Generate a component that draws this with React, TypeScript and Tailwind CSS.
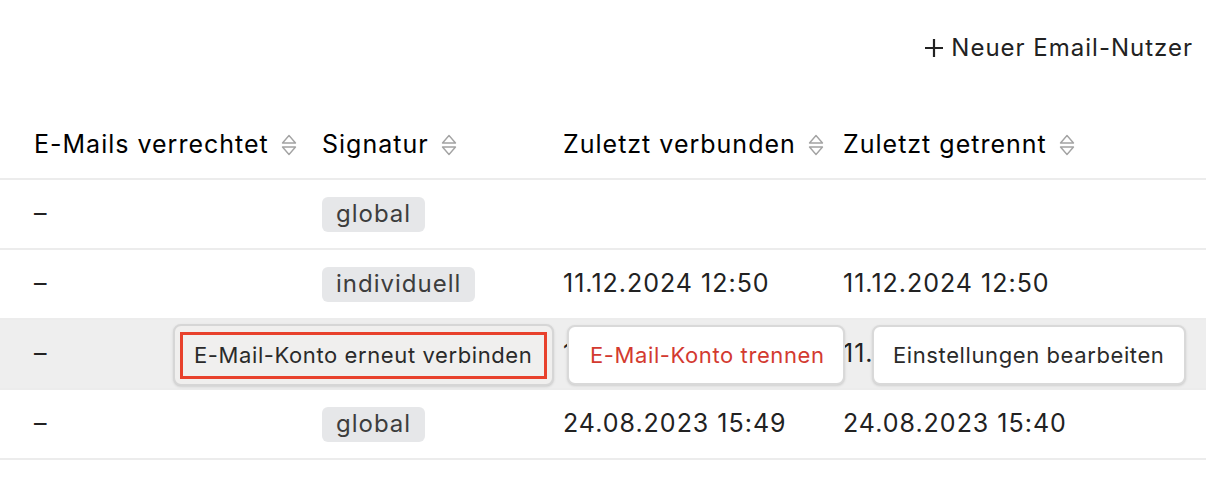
import React from "react";

type Row = {
  signatur: string;
  verbunden: string;
  getrennt: string;
  active?: boolean;
};

const rows: Row[] = [
  { signatur: "global", verbunden: "", getrennt: "" },
  { signatur: "individuell", verbunden: "11.12.2024 12:50", getrennt: "11.12.2024 12:50" },
  { signatur: "individuell", verbunden: "11.12.2024 12:50", getrennt: "11.12.2024 12:50", active: true },
  { signatur: "global", verbunden: "24.08.2023 15:49", getrennt: "24.08.2023 15:40" },
];

function SortIcon() {
  return (
    <svg width="16" height="26" viewBox="0 0 16 26" fill="none" className="shrink-0">
      <path d="M1.5 11 L8 3.5 L14.5 11 Z" stroke="#a3a3a3" strokeWidth="1.4" strokeLinejoin="round" />
      <path d="M1.5 15 L8 22.5 L14.5 15 Z" stroke="#a3a3a3" strokeWidth="1.4" strokeLinejoin="round" />
    </svg>
  );
}

function HeaderCell({ label, className }: { label: string; className: string }) {
  return (
    <div className={`flex items-center gap-[12px] ${className}`}>
      <span>{label}</span>
      <SortIcon />
    </div>
  );
}

function Badge({ text }: { text: string }) {
  return (
    <span className="inline-flex h-[35px] items-center rounded-[6px] bg-[#e6e7e9] px-[14px] text-[24px] tracking-[1px] text-[#3d3d3d]">
      {text}
    </span>
  );
}

export default function App() {
  return (
    <div
      className="h-[480px] w-[1226px] bg-white text-[#1f1f1f]"
      style={{ fontFamily: "Inter, 'Noto Sans', sans-serif" }}
    >
      <div className="w-[1206px]">
        {/* toolbar */}
        <div className="flex h-[92px] items-start justify-end pr-[13px] pt-[30px]">
          <button type="button" className="flex items-center gap-[7px] text-[24px] tracking-[1px] text-[#222]">
            <svg width="20" height="20" viewBox="0 0 20 20" fill="none">
              <path d="M10 1 V19 M1 10 H19" stroke="#222" strokeWidth="2.2" />
            </svg>
            <span>Neuer Email-Nutzer</span>
          </button>
        </div>

        {/* table header */}
        <div className="flex h-[88px] items-center border-b-2 border-[#ececec] pt-[20px] text-[25px] tracking-[1px] text-black">
          <HeaderCell label="E-Mails verrechtet" className="w-[322px] pl-[34px]" />
          <HeaderCell label="Signatur" className="w-[241px]" />
          <HeaderCell label="Zuletzt verbunden" className="w-[280px]" />
          <HeaderCell label="Zuletzt getrennt" className="flex-1" />
        </div>

        {/* rows */}
        {rows.map((row, i) => (
          <div
            key={i}
            className={`relative flex h-[70px] items-center border-b-2 border-[#ececec] text-[25px] tracking-[1px] text-[#222] ${
              row.active ? "bg-[#eeeeee]" : ""
            }`}
          >
            <div className="w-[322px] pl-[34px]">–</div>
            <div className="w-[241px]">{!row.active && <Badge text={row.signatur} />}</div>
            <div className="w-[280px]">{row.verbunden}</div>
            <div className="flex-1">{row.getrennt}</div>

            {row.active && (
              <div className="absolute left-[173px] top-[4px] flex items-center text-[22px] tracking-[0.6px]">
                <button
                  type="button"
                  className="flex h-[62px] w-[381px] items-center justify-center rounded-[8px] border-2 border-[#d6d6d6] bg-[#f0efee] shadow-sm"
                >
                  <span className="flex h-[47px] w-[367px] items-center border-[3px] border-[#e8412c] pl-[11px] text-[#2a2a2a]">
                    E-Mail-Konto erneut verbinden
                  </span>
                </button>
                <button
                  type="button"
                  className="ml-[13px] flex h-[60px] w-[278px] items-center rounded-[8px] border-2 border-[#d9d9d9] bg-white pl-[21px] text-[#d33a30] shadow-sm"
                >
                  E-Mail-Konto trennen
                </button>
                <button
                  type="button"
                  className="ml-[27px] flex h-[60px] w-[314px] items-center rounded-[8px] border-2 border-[#d9d9d9] bg-white pl-[19px] text-[#2a2a2a] shadow-sm"
                >
                  Einstellungen bearbeiten
                </button>
              </div>
            )}
          </div>
        ))}
      </div>
    </div>
  );
}
